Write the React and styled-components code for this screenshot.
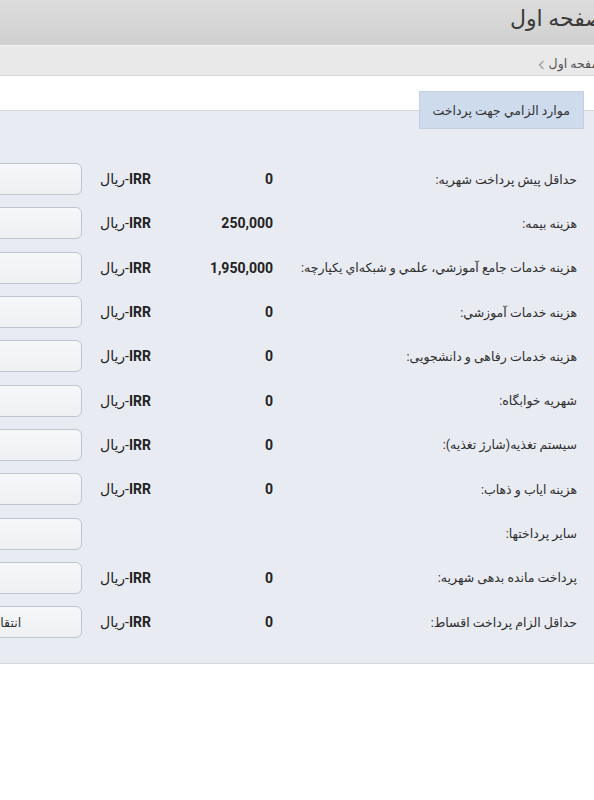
import styled, { createGlobalStyle } from 'styled-components';

const GlobalStyle = createGlobalStyle`
    html, body {
        margin: 0;
        padding: 0;
        overflow: hidden;
        direction: rtl;
        background: #ffffff;
        font-family: Roboto, "DejaVu Sans", sans-serif;
        color: #333;
    }
`;

const Page = styled.div`
    margin-right: -10px;
`;

const TitleBar = styled.div`
    height: 45px;
    display: flex;
    align-items: center;
    background: linear-gradient(#dcdcdc, #d0d0d0);
    border-bottom: 1px solid #f4f4f4;
    h1 {
        margin: 0 0 8px;
        font-size: 22px;
        font-weight: normal;
        color: #3a3a3a;
    }
`;

const Breadcrumb = styled.div`
    height: 30px;
    display: flex;
    align-items: center;
    gap: 4px;
    padding-right: 2px;
    padding-top: 5px;
    box-sizing: border-box;
    background: #e9e9e9;
    border-bottom: 1px solid #d3d3d3;
    font-size: 12.5px;
    color: #555;
    svg {
        margin-top: 3px;
    }
`;

const Section = styled.div`
    padding-top: 15px;
`;

const Panel = styled.fieldset`
    margin: 0;
    padding: 0 20px 19px 0;
    border: none;
    border-top: 1px solid #d4d7dc;
    border-bottom: 1px solid #d4d7dc;
    background: #e8ebf1;
    min-width: 0;
`;

const Legend = styled.legend`
    height: 38px;
    line-height: 38px;
    padding: 0 13px;
    box-sizing: border-box;
    background: #cedbec;
    border: 1px solid #c3d0e2;
    font-size: 12.5px;
    color: #333;
`;

const Rows = styled.div`
    padding-top: 28px;
    margin-right: 7px;
`;

const Row = styled.div`
    display: grid;
    grid-template-columns: 304px 122px 69px 1fr;
    align-items: center;
    height: 44.3px;
`;

const Label = styled.div`
    font-size: 12.5px;
    color: #2e2e2e;
    white-space: nowrap;
`;

const Amount = styled.div`
    font-size: 14px;
    font-weight: 700;
    color: #222;
    direction: ltr;
    text-align: right;
`;

const Currency = styled.div`
    font-size: 14px;
    color: #222;
    white-space: nowrap;
    b {
        font-weight: 700;
    }
`;

const Field = styled.div`
    width: 190px;
    height: 32px;
    box-sizing: border-box;
    border: 1px solid #bcc5d1;
    border-radius: 6px;
    background: linear-gradient(#f6f7f8, #eff0f2);
    display: flex;
    align-items: center;
    justify-content: center;
    font-size: 12.5px;
    color: #333;
    white-space: nowrap;
`;

const Chevron = () => (
    <svg width='7' height='10' viewBox='0 0 7 10'>
        <path d='M5.5 1 L1.5 5 L5.5 9' fill='none' stroke='#a8a8a8' strokeWidth='1.6' />
    </svg>
);

const items = [
    { label: 'حداقل پيش پرداخت شهريه:', amount: '0' },
    { label: 'هزينه بيمه:', amount: '250,000' },
    { label: 'هزينه خدمات جامع آموزشي، علمي و شبکه‌اي يکپارچه:', amount: '1,950,000' },
    { label: 'هزينه خدمات آموزشي:', amount: '0' },
    { label: 'هزينه خدمات رفاهی و دانشجويی:', amount: '0' },
    { label: 'شهريه خوابگاه:', amount: '0' },
    { label: 'سيستم تغذيه(شارژ تغذيه):', amount: '0' },
    { label: 'هزينه اياب و ذهاب:', amount: '0' },
    { label: 'ساير پرداختها:' },
    { label: 'پرداخت مانده بدهی شهريه:', amount: '0' },
    { label: 'حداقل الزام پرداخت اقساط:', amount: '0', action: 'انتقال به بانک' },
];

const App = () => {
    return (
        <>
            <GlobalStyle />
            <Page>
                <TitleBar>
                    <h1>صفحه اول</h1>
                </TitleBar>
                <Breadcrumb>
                    <span>صفحه اول</span>
                    <Chevron />
                </Breadcrumb>
                <Section>
                    <Panel>
                        <Legend>موارد الزامي جهت پرداخت</Legend>
                        <Rows>
                            {items.map((item) => (
                                <Row key={item.label}>
                                    <Label>{item.label}</Label>
                                    <Amount>{item.amount}</Amount>
                                    <Currency>
                                        {item.amount && (
                                            <>
                                                <b>IRR</b>-ريال
                                            </>
                                        )}
                                    </Currency>
                                    <div>
                                        <Field>{item.action}</Field>
                                    </div>
                                </Row>
                            ))}
                        </Rows>
                    </Panel>
                </Section>
            </Page>
        </>
    );
};

export default App;
